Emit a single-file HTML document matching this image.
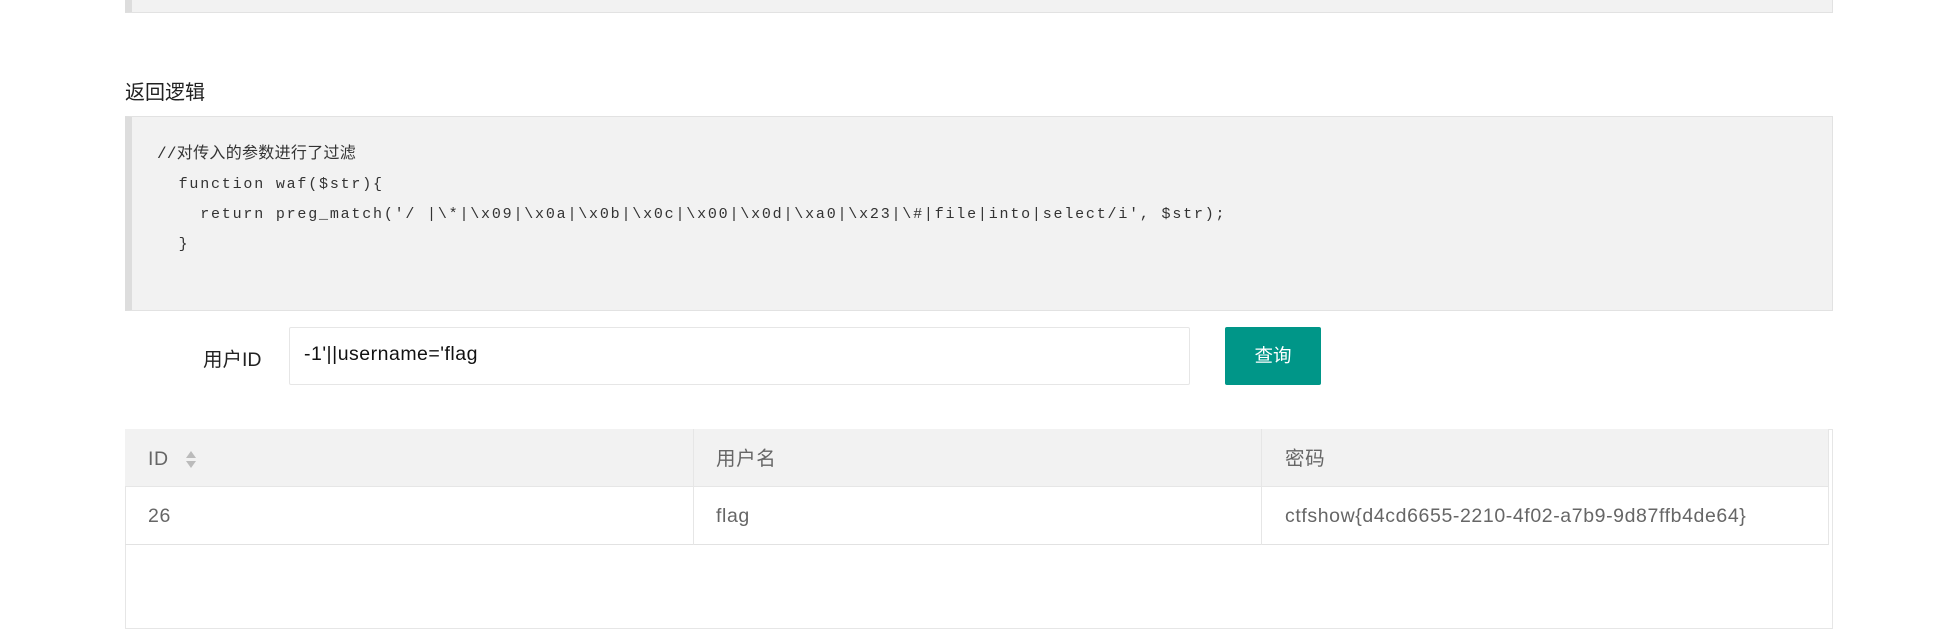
<!DOCTYPE html>
<html><head><meta charset="utf-8"><style>
*{margin:0;padding:0;box-sizing:border-box}
body{width:1954px;height:612px;background:#fff;position:relative;overflow:hidden;font-family:"Liberation Sans","Noto Sans CJK SC",sans-serif;color:#333}
.abs{position:absolute}
.box{background:#f2f2f2;border:1px solid #e2e2e2;border-left:7px solid #ddd}
.code{font-family:"Liberation Mono","Courier New",monospace;font-size:15px;letter-spacing:1.8px;color:#333;white-space:pre;line-height:30px}
.cell{position:absolute;font-size:19.5px;letter-spacing:0.6px;color:#666;line-height:22px}
</style></head><body>
<div class="abs box" style="left:125px;top:-10px;width:1708px;height:23px"></div>
<div class="abs" style="left:125px;top:76px;font-size:20px;color:#222">返回逻辑</div>
<div class="abs box" style="left:125px;top:116px;width:1708px;height:195px"></div>
<div class="abs code" style="left:157px;top:139px"><span style="letter-spacing:0.3px;font-size:16px">//对传入的参数进行了过滤</span>
  function waf($str){
    return preg_match('/ |\*|\x09|\x0a|\x0b|\x0c|\x00|\x0d|\xa0|\x23|\#|file|into|select/i', $str);
  }</div>
<div class="abs" style="left:203px;top:343px;font-size:19.5px;color:#222">用户ID</div>
<div class="abs" style="left:289px;top:327px;width:901px;height:58px;border:1px solid #e6e6e6;border-radius:2px"></div>
<div class="abs" style="left:304px;top:343px;font-size:19.5px;letter-spacing:0.5px;color:#111">-1'||username='flag</div>
<div class="abs" style="left:1225px;top:327px;width:96px;height:58px;background:#009688;border-radius:2px;color:#fff;font-size:18.5px;text-align:center;line-height:58px">查询</div>
<div class="abs" style="left:125px;top:429px;width:1708px;height:200px;border:1px solid #e6e6e6"></div>
<div class="abs" style="left:125px;top:429px;width:1704px;height:58px;background:#f2f2f2;border-bottom:1px solid #e6e6e6"></div>
<div class="abs" style="left:125px;top:487px;width:1704px;height:58px;border-bottom:1px solid #e2e2e2;border-right:1px solid #e6e6e6"></div>
<div class="abs" style="left:693px;top:429px;width:1px;height:116px;background:#e6e6e6"></div>
<div class="abs" style="left:1261px;top:429px;width:1px;height:116px;background:#e6e6e6"></div>
<div class="abs" style="left:1828px;top:429px;width:1px;height:58px;background:#e6e6e6"></div>
<div class="cell" style="left:148px;top:448px">ID</div>
<svg class="abs" style="left:184px;top:450px" width="14" height="20"><path d="M7 1 L12 8 L2 8Z M2 11 L12 11 L7 18Z" fill="#bbb"/></svg>
<div class="cell" style="left:716px;top:448px">用户名</div>
<div class="cell" style="left:1285px;top:448px">密码</div>
<div class="cell" style="left:148px;top:505px">26</div>
<div class="cell" style="left:716px;top:505px">flag</div>
<div class="cell" style="left:1285px;top:505px">ctfshow{d4cd6655-2210-4f02-a7b9-9d87ffb4de64}</div>
</body></html>
